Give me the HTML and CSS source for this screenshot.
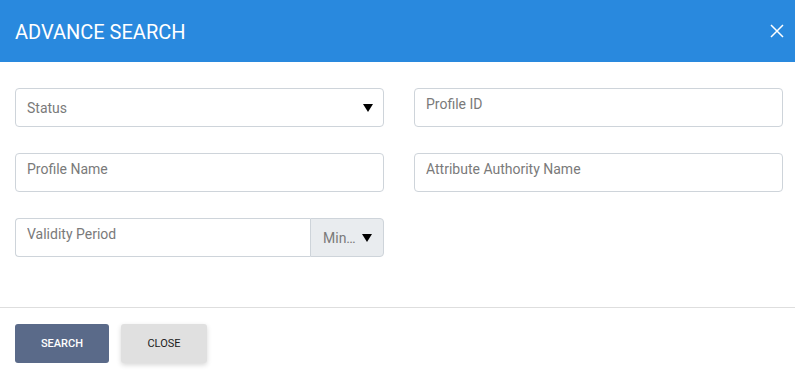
FILE: index.html
```html
<!DOCTYPE html>
<html lang="en">

<head>
    <meta charset="UTF-8">
    <meta name="viewport" content="width=device-width, initial-scale=1.0">
    <title>Advance Search</title>
    <link rel="stylesheet" href="styles.css">
</head>

<body>
    <div class="modal">
        <!-- Cabecera -->
        <div class="modal-header">
            <h2>ADVANCE SEARCH</h2>
            <button class="close-x" type="button" aria-label="Close">
                <svg width="14" height="14" viewBox="0 0 14 14">
                    <path d="M1 1 L13 13 M13 1 L1 13" stroke="#fff" stroke-width="1.5" fill="none" />
                </svg>
            </button>
        </div>

        <!-- Formulario -->
        <div class="modal-body">
            <div class="select-box">
                <span>Status</span>
                <svg width="10" height="8" viewBox="0 0 10 8"><polygon points="0,0 10,0 5,8" fill="#000" /></svg>
            </div>
            <input type="text" class="field" placeholder="Profile ID">
            <input type="text" class="field" placeholder="Profile Name">
            <input type="text" class="field" placeholder="Attribute Authority Name">
            <div class="input-group">
                <input type="text" class="field" placeholder="Validity Period">
                <div class="addon">
                    <span>Min…</span>
                    <svg width="10" height="8" viewBox="0 0 10 8"><polygon points="0,0 10,0 5,8" fill="#000" /></svg>
                </div>
            </div>
        </div>

        <!-- Botones -->
        <div class="modal-footer">
            <button class="btn btn-search" type="button">Search</button>
            <button class="btn btn-close" type="button">Close</button>
        </div>
    </div>
</body>

</html>
```

FILE: styles.css
```css
/* Estilos generales */
body {
    font-family: 'Roboto', sans-serif;
    background-color: #fff;
    margin: 0;
    padding: 0;
}

.modal {
    width: 795px;
    height: 377px;
    background-color: #fff;
}

/* Cabecera azul */
.modal-header {
    height: 62px;
    background-color: #2989de;
    display: flex;
    align-items: center;
    justify-content: space-between;
    padding: 0 11px 0 15px;
    box-sizing: border-box;
}

.modal-header h2 {
    margin: 0;
    color: #fff;
    font-size: 20px;
    font-weight: 400;
    padding-top: 1px;
}

.close-x {
    background: none;
    border: none;
    padding: 0;
    width: 14px;
    height: 14px;
    display: flex;
}

/* Cuerpo del formulario */
.modal-body {
    display: grid;
    grid-template-columns: 369px 369px;
    column-gap: 30px;
    row-gap: 26px;
    padding: 26px 12px 50px 15px;
    border-bottom: 1px solid #dedede;
}

.field,
.select-box {
    height: 39px;
    box-sizing: border-box;
    border: 1px solid #ced4da;
    border-radius: 4px;
    font-family: 'Roboto', sans-serif;
    font-size: 14px;
    color: #495057;
    background-color: #fff;
}

.field {
    width: 100%;
    padding: 6px 11px 13px;
    outline: none;
}

.field::placeholder {
    color: #7a7a7a;
}

.select-box {
    display: flex;
    align-items: center;
    justify-content: space-between;
    padding: 0 10px 0 11px;
    color: #7a7a7a;
}

.input-group {
    display: flex;
}

.input-group .field {
    border-radius: 4px 0 0 4px;
    border-right: none;
}

.addon {
    flex: 0 0 74px;
    height: 39px;
    box-sizing: border-box;
    display: flex;
    align-items: center;
    justify-content: space-between;
    padding: 0 11px 0 12px;
    background-color: #e9ecef;
    border: 1px solid #ced4da;
    border-radius: 0 4px 4px 0;
    font-size: 14px;
    color: #7a7a7a;
}

/* Botones */
.modal-footer {
    display: flex;
    gap: 12px;
    padding: 16px 15px;
}

.btn {
    height: 39px;
    border: none;
    border-radius: 3px;
    font-family: 'Roboto', sans-serif;
    font-size: 11px;
    font-weight: 500;
    text-transform: uppercase;
    cursor: pointer;
}

.btn-search {
    width: 94px;
    background-color: #5a6a89;
    color: #fff;
}

.btn-close {
    width: 86px;
    background-color: #e0e0e0;
    color: #212121;
    font-weight: 400;
    box-shadow: 0 2px 5px rgba(0, 0, 0, 0.16);
}
```
